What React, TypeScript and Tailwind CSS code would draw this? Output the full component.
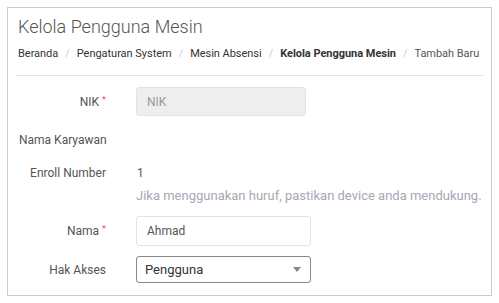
const font = { fontFamily: "Roboto, 'Liberation Sans', sans-serif" };

function Label({ text, required }: { text: string; required?: boolean }) {
  return (
    <div className="w-[90px] shrink-0 whitespace-nowrap text-right text-[12px] text-[#555]">
      {text}
      {required && <span className="relative -top-[3px] ml-[3px] text-[9px] text-[#f0506e]">*</span>}
    </div>
  );
}

export default function App() {
  const crumbs = ["Beranda", "Pengaturan System", "Mesin Absensi"];
  return (
    <div className="h-[303px] w-[499px] bg-white" style={font}>
      <div className="m-[7px] border border-[#cccccc] px-[8px] pb-[12px] pt-[7px]">
        <h1 className="pl-[2px] text-[18px] font-light leading-[24px] text-[#555]">Kelola Pengguna Mesin</h1>
        <div className="mt-[7px] flex items-center whitespace-nowrap pl-[2px] text-[11px] leading-[16px] tracking-[-0.03px] text-[#333]">
          {crumbs.map((c) => (
            <span key={c} className="flex shrink-0 items-center">
              {c}
              <span className="px-[7px] text-[#ccc]">/</span>
            </span>
          ))}
          <span className="shrink-0 font-bold">Kelola Pengguna Mesin</span>
          <span className="px-[7px] text-[#ccc]">/</span>
          <span className="shrink-0 text-[#555]">Tambah Baru</span>
        </div>
        <div className="mt-[13px] border-t border-[#e5e5e5]" />

        <div className="flex flex-col">
          <div className="mt-[11px] flex h-[29px] items-center gap-[30px]">
            <Label text="NIK" required />
            <div className="flex h-[29px] w-[170px] items-center rounded-[3px] border border-[#e3e3e3] bg-[#eeeeee] px-[10px] text-[12px] text-[#999]">
              NIK
            </div>
          </div>

          <div className="mt-[15px] flex h-[18px] items-center">
            <div className="whitespace-nowrap pl-[3px] text-[12px] text-[#555]">Nama Karyawan</div>
          </div>

          <div className="mt-[15px] flex h-[18px] items-center gap-[30px]">
            <Label text="Enroll Number" />
            <div className="pl-[1px] text-[12px] text-[#555]">1</div>
          </div>

          <div className="mt-[5px] flex h-[18px] items-center whitespace-nowrap pl-[120px] text-[13px] text-[#a9a6b3]">
            Jika menggunakan huruf, pastikan device anda mendukung.
          </div>

          <div className="mt-[11px] flex h-[30px] items-center gap-[30px]">
            <Label text="Nama" required />
            <div className="flex h-[30px] w-[175px] items-center rounded-[3px] border border-[#e3e3e3] px-[10px] text-[12px] text-[#555]">
              Ahmad
            </div>
          </div>

          <div className="mt-[10px] flex h-[27px] items-center gap-[30px]">
            <Label text="Hak Akses" />
            <div className="flex h-[27px] w-[175px] items-center justify-between rounded-[3px] border border-[#888] pl-[8px] pr-[9px] text-[13px] text-[#333]">
              Pengguna
              <svg width="8" height="5" viewBox="0 0 8 5">
                <path d="M0 0h8L4 5z" fill="#888" />
              </svg>
            </div>
          </div>
        </div>
      </div>
    </div>
  );
}
